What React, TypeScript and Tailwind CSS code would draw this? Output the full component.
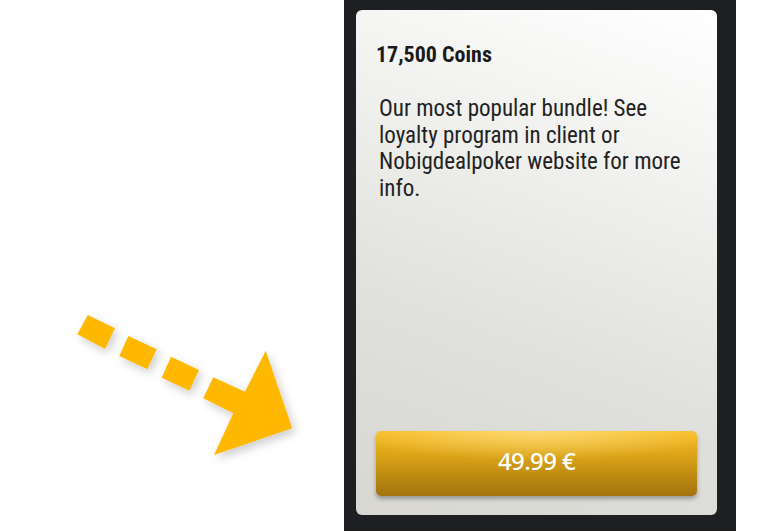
import React from "react";

const cond = "'Roboto Condensed', 'Roboto', 'Liberation Sans Narrow', sans-serif";

function Arrow() {
  return (
    <svg width="344" height="531" viewBox="0 0 344 531" className="block">
      <defs>
        <filter id="sh" x="-30%" y="-30%" width="160%" height="160%">
          <feDropShadow dx="3" dy="4" stdDeviation="5" floodColor="#000" floodOpacity="0.2" />
        </filter>
      </defs>
      <g fill="#ffb800" filter="url(#sh)">
        <polygon points="77.3,334.3 87.7,315 115,328.3 105,349" />
        <polygon points="119.3,356 128.3,336 156.7,349.3 147.3,369.3" />
        <polygon points="161.7,377.7 171,356.7 199,370 189.3,390.7" />
        <polygon points="203.3,398.3 213.3,377.3 245,391.7 265.7,350.7 292.3,428.3 214,455 233.3,413.3" />
      </g>
    </svg>
  );
}

export default function App() {
  return (
    <div className="w-[768px] h-[531px] flex bg-white overflow-hidden">
      <div className="w-[344px] h-full shrink-0">
        <Arrow />
      </div>
      <div className="w-[392px] h-full shrink-0 bg-[#1e1f23] pt-[10px] pl-[12px]">
        <div className="w-[361px] h-[505px] rounded-[6px] bg-[linear-gradient(200deg,#ffffff_0%,#f1f1ef_30%,#e0e0dc_65%,#d8d7d2_100%)] flex flex-col px-[20px] pb-[19px]">
          <div
            className="mt-[32px] text-[22px] leading-[26px] font-bold text-[#1a1a1a]"
            style={{ fontFamily: cond }}
          >
            17,500 Coins
          </div>
          <div
            className="mt-[28px] ml-[3px] text-[23px] leading-[26.5px] text-[#222222]"
            style={{ fontFamily: cond }}
          >
            Our most popular bundle! See loyalty program in client or Nobigdealpoker website for more info.
          </div>
          <div className="flex-1" />
          <button
            className="h-[65px] w-full rounded-[5px] shadow-[0_3px_4px_rgba(0,0,0,0.3)] bg-[radial-gradient(ellipse_60%_45%_at_50%_0%,rgba(255,225,140,0.75),rgba(255,225,140,0)_100%),linear-gradient(180deg,#f8bd22_0%,#d9a217_40%,#b8860f_75%,#a37310_100%)] flex items-center justify-center pb-[5px] text-white text-[24px] tracking-[-0.6px] font-medium"
            style={{ fontFamily: "'Noto Sans', 'Open Sans', sans-serif" }}
          >
            49.99 €
          </button>
        </div>
      </div>
      <div className="flex-1" />
    </div>
  );
}
